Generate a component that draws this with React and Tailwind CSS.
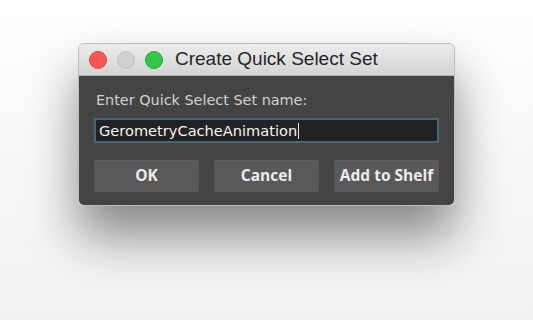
import React from "react"

const Light = ({ color, ring }) => (
    <span className={`block w-[18px] h-[18px] rounded-full border ${color} ${ring}`} />
)

const Btn = ({ children }) => (
    <button className="h-[32px] w-[105px] bg-[#595959] rounded-[2px] text-[15.5px] font-bold text-[#ececec] shadow-[inset_0_1px_0_rgba(255,255,255,0.05)]" style={{ fontFamily: '"Open Sans", "DejaVu Sans", sans-serif' }}>
        {children}
    </button>
)

const App = () => {
    return (
        <div className="w-[533px] h-[320px] bg-gradient-to-b from-white to-[#f1f1f1] flex justify-center pt-[43px] overflow-hidden" style={{ fontFamily: '"DejaVu Sans", "Liberation Sans", sans-serif' }}>
            <div className="w-[377px] h-[163px] rounded-[6px] overflow-hidden border border-[#bdbdbd] shadow-[0_30px_50px_rgba(0,0,0,0.45)] flex flex-col">
                <div className="h-[32px] bg-gradient-to-b from-[#ececec] to-[#d4d4d4] border-b border-[#b4b4b4] flex items-center pl-[10px]">
                    <div className="flex gap-[10px]">
                        <Light color="bg-[#fc5753]" ring="border-[#df4744]" />
                        <Light color="bg-[#d0d0d0]" ring="border-[#c2c2c2]" />
                        <Light color="bg-[#33c748]" ring="border-[#27aa35]" />
                    </div>
                    <span className="ml-[12px] text-[19px] text-[#262626]" style={{ fontFamily: '"Liberation Sans", Arial, sans-serif' }}>Create Quick Select Set</span>
                </div>
                <div className="flex-1 bg-[#444444] px-[15px] pt-[14px]">
                    <div className="text-[14.4px] text-[#d2d2d2] pl-[2px] leading-[20px]">Enter Quick Select Set name:</div>
                    <div className="mt-[8px] h-[25px] bg-[#222222] border-2 border-[#3f6a7e] flex items-center pl-[3px] text-[14.6px] text-[#f2f2f2]">
                        GerometryCacheAnimation<span className="w-px h-[16px] bg-[#e0e0e0] ml-px" />
                    </div>
                    <div className="mt-[17px] flex justify-between">
                        <Btn>OK</Btn>
                        <Btn>Cancel</Btn>
                        <Btn>Add to Shelf</Btn>
                    </div>
                </div>
            </div>
        </div>
    )
}

export default App
